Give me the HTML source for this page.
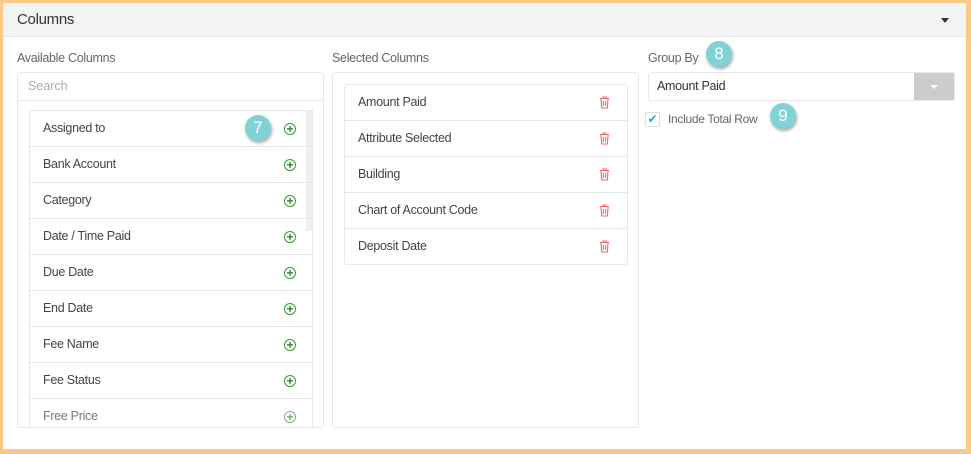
<!DOCTYPE html>
<html><head><style>
*{box-sizing:border-box;margin:0;padding:0}
body{width:971px;height:454px;background:#fcc88a;font-family:"Liberation Sans",sans-serif;position:relative;overflow:hidden}
.main{position:absolute;left:3px;top:3px;width:963px;height:446px;background:#fff}
.hdr{position:absolute;left:0;top:0;width:963px;height:34px;background:#f4f4f4;border-bottom:1px solid #e6e6e6}
.hdr span{position:absolute;left:14px;top:8px;font-size:15px;color:#333;letter-spacing:-0.3px}
.caret{position:absolute;left:938px;top:15px;border-left:4px solid transparent;border-right:4px solid transparent;border-top:5px solid #333}
.lbl{position:absolute;font-size:12.5px;color:#666;letter-spacing:-0.3px}
.box{position:absolute;border:1px solid #e8e8e8;border-radius:3px;background:#fff}
.row{position:absolute;left:0;height:36px;width:100%;border-top:1px solid #e6e6e6;font-size:12.5px;color:#444;letter-spacing:-0.3px}
.row span{position:absolute;left:13px;top:10px}
.plus{position:absolute;width:12px;height:12px;border:1px solid #3a9a3a;border-radius:50%;color:#2a8a2a;font-size:12px;line-height:10px;text-align:center;font-weight:bold;letter-spacing:0}
.tr{position:absolute;left:254px;top:11px}
.badge{position:absolute;width:26px;height:26px;border-radius:50%;background:#7fd3d6;color:#fff;font-size:17px;text-align:center;line-height:26px;box-shadow:1px 2px 3px rgba(0,0,0,.35)}
</style></head><body>
<div class="main">
<div class="hdr"><span>Columns</span><div class="caret"></div></div>
</div>
<div class="lbl" style="left:17px;top:51px">Available Columns</div>
<div class="box" style="left:17px;top:72px;width:307px;height:356px">
<div style="position:absolute;left:0;top:0;width:100%;height:28px;border-bottom:1px solid #e8e8e8;font-size:12.5px;color:#aaa;padding:6px 10px">Search</div>
<div style="position:absolute;left:11px;top:37px;width:284px;height:318px;border:1px solid #e8e8e8;border-bottom:none;overflow:hidden">
<div style="position:absolute;right:0;top:0;width:6px;height:120px;background:#eee"></div>
<div class="row" style="top:-1px"><span>Assigned to</span><div class="plus" style="left:254px;top:12px">+</div></div>
<div class="row" style="top:35px"><span>Bank Account</span><div class="plus" style="left:254px;top:12px">+</div></div>
<div class="row" style="top:71px"><span>Category</span><div class="plus" style="left:254px;top:12px">+</div></div>
<div class="row" style="top:107px"><span>Date / Time Paid</span><div class="plus" style="left:254px;top:12px">+</div></div>
<div class="row" style="top:143px"><span>Due Date</span><div class="plus" style="left:254px;top:12px">+</div></div>
<div class="row" style="top:179px"><span>End Date</span><div class="plus" style="left:254px;top:12px">+</div></div>
<div class="row" style="top:215px"><span>Fee Name</span><div class="plus" style="left:254px;top:12px">+</div></div>
<div class="row" style="top:251px"><span>Fee Status</span><div class="plus" style="left:254px;top:12px">+</div></div>
<div class="row" style="top:287px;color:#777"><span>Free Price</span><div class="plus" style="left:254px;top:12px;opacity:.7">+</div></div>
</div>
</div>
<div class="badge" style="left:245px;top:115px">7</div>
<div class="lbl" style="left:332px;top:51px">Selected Columns</div>
<div class="box" style="left:332px;top:72px;width:307px;height:356px">
<div class="box" style="left:11px;top:11px;width:284px;height:181px;overflow:hidden">
<div class="row" style="top:-1px"><span>Amount Paid</span><svg class="tr" width="11" height="13" viewBox="0 0 11 13"><path d="M1 2.5h9M4 2.5V1h3v1.5M2 3l.6 9h5.8L9 3M4.3 5v5M6.7 5v5" fill="none" stroke="#f06a6a" stroke-width="1.1"/></svg></div>
<div class="row" style="top:35px"><span>Attribute Selected</span><svg class="tr" width="11" height="13" viewBox="0 0 11 13"><path d="M1 2.5h9M4 2.5V1h3v1.5M2 3l.6 9h5.8L9 3M4.3 5v5M6.7 5v5" fill="none" stroke="#f06a6a" stroke-width="1.1"/></svg></div>
<div class="row" style="top:71px"><span>Building</span><svg class="tr" width="11" height="13" viewBox="0 0 11 13"><path d="M1 2.5h9M4 2.5V1h3v1.5M2 3l.6 9h5.8L9 3M4.3 5v5M6.7 5v5" fill="none" stroke="#f06a6a" stroke-width="1.1"/></svg></div>
<div class="row" style="top:107px"><span>Chart of Account Code</span><svg class="tr" width="11" height="13" viewBox="0 0 11 13"><path d="M1 2.5h9M4 2.5V1h3v1.5M2 3l.6 9h5.8L9 3M4.3 5v5M6.7 5v5" fill="none" stroke="#f06a6a" stroke-width="1.1"/></svg></div>
<div class="row" style="top:143px"><span>Deposit Date</span><svg class="tr" width="11" height="13" viewBox="0 0 11 13"><path d="M1 2.5h9M4 2.5V1h3v1.5M2 3l.6 9h5.8L9 3M4.3 5v5M6.7 5v5" fill="none" stroke="#f06a6a" stroke-width="1.1"/></svg></div>
</div>
</div>
<div class="lbl" style="left:648px;top:51px">Group By</div>
<div class="badge" style="left:706px;top:41px">8</div>
<div class="box" style="left:648px;top:72px;width:307px;height:29px;font-size:12.5px;color:#333;padding:6px 8px;letter-spacing:-0.3px">Amount Paid
<div style="position:absolute;right:0;top:0;width:40px;height:27px;background:#ccc"><div style="position:absolute;left:16px;top:12px;border-left:4px solid transparent;border-right:4px solid transparent;border-top:4px solid #fff"></div></div></div>
<div style="position:absolute;left:645px;top:112px;width:15px;height:15px;border:1px solid #ddd;border-radius:2px;color:#1ba7d6;font-size:12px;line-height:13px;text-align:center">✔</div>
<div class="lbl" style="left:668px;top:112px;font-size:12px">Include Total Row</div>
<div class="badge" style="left:770px;top:103px">9</div>
</body></html>
